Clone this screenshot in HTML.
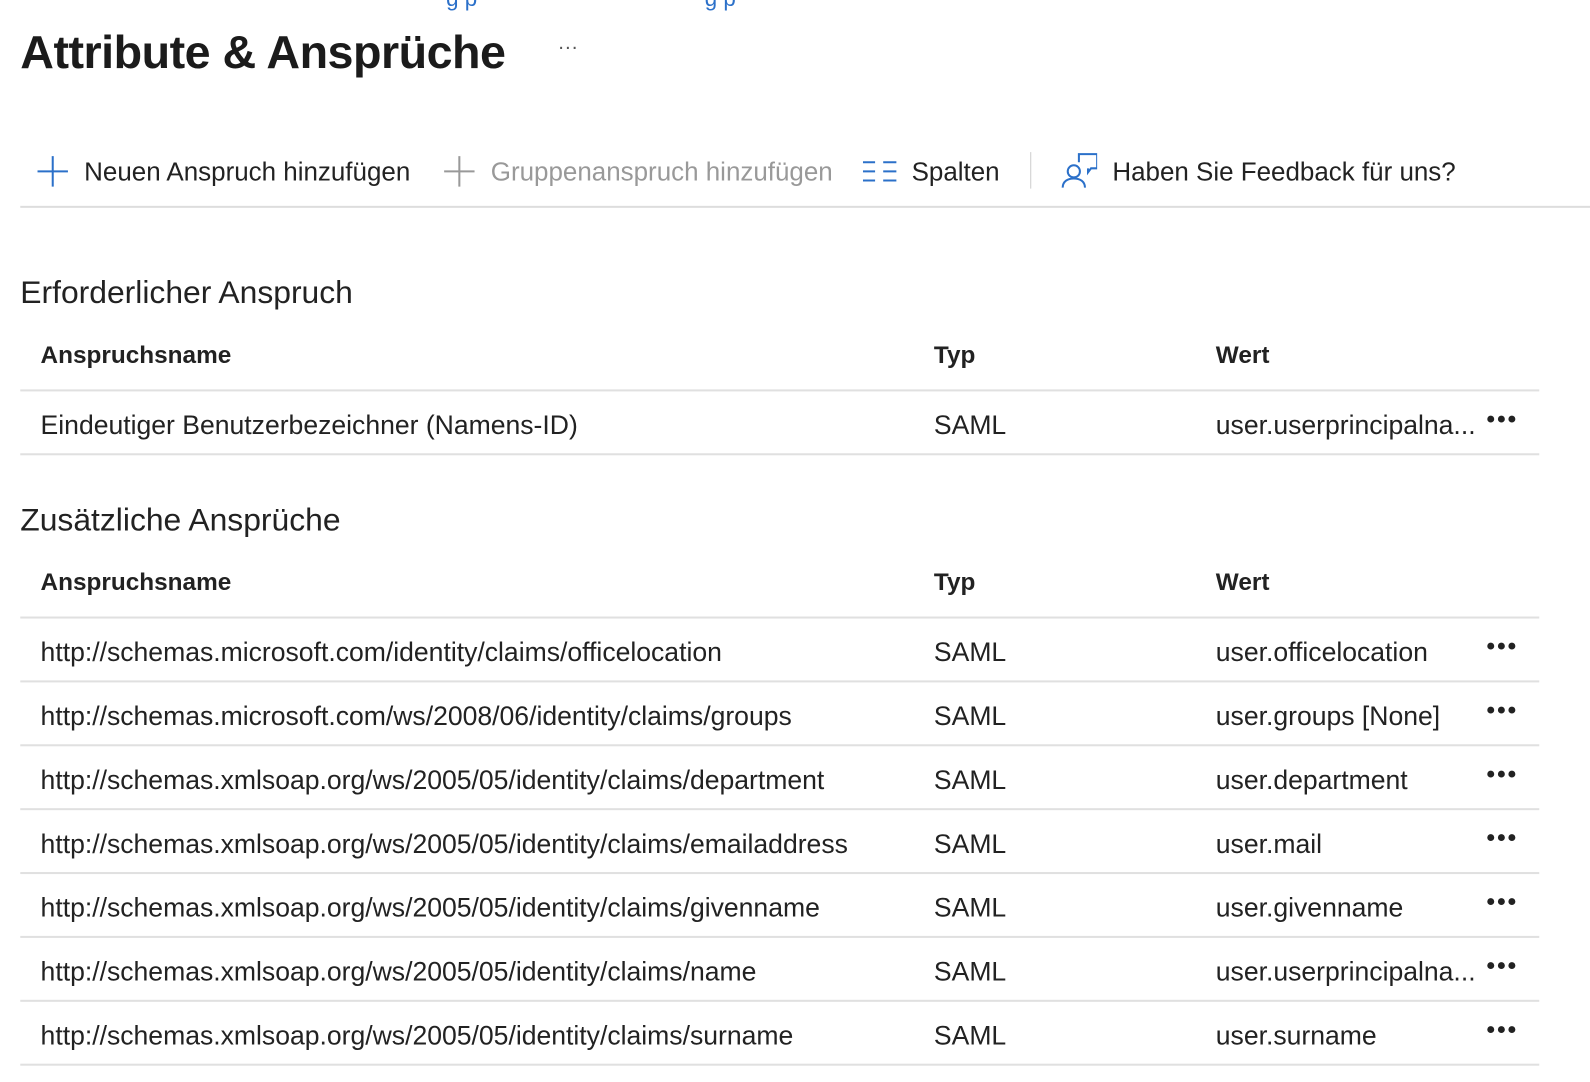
<!DOCTYPE html>
<html><head><meta charset="utf-8"><style>
body{margin:0;width:1590px;height:1082px;background:#fff;font-family:"Liberation Sans",sans-serif;color:#222;overflow:hidden}
#w{position:absolute;left:0;top:0;width:1568px;height:1067px;transform:scale(1.014);transform-origin:0 0}
.a{position:absolute;white-space:nowrap}
h1{position:absolute;left:20px;top:24px;margin:0;font-size:46px;font-weight:bold;letter-spacing:-0.5px;color:#1b1b1b}
.tb{font-size:25.6px;top:156px}
.sec{font-size:31.4px;color:#222}
.row{position:absolute;left:20px;width:1498px;height:63px;border-bottom:2px solid #e0e0e0;font-size:26.2px}
.row span{position:absolute;top:20px;white-space:nowrap}
.h span{font-weight:bold;font-size:24px;top:16px}
.c1{left:20px}.c2{left:901px}.c3{left:1179px}
.d{left:1446px;letter-spacing:2px;font-weight:bold;font-size:24px;top:16px!important}
</style></head><body><div id="w">
<div class="a" style="left:440px;top:-14px;font-size:22px;color:#2b70c9">g p</div>
<div class="a" style="left:695px;top:-14px;font-size:22px;color:#2b70c9">g p</div>
<h1>Attribute &amp; Ansprüche</h1>
<div class="a" style="left:550px;top:36px;font-size:20px;color:#555">···</div>
<svg class="a" style="left:36px;top:153px" width="32" height="32"><path d="M16 1V31M1 16H31" stroke="#2b70c9" stroke-width="2"/></svg>
<div class="a tb" style="left:83px">Neuen Anspruch hinzufügen</div>
<svg class="a" style="left:437px;top:153px" width="32" height="32"><path d="M16 1V31M1 16H31" stroke="#999" stroke-width="2"/></svg>
<div class="a tb" style="left:484px;color:#999">Gruppenanspruch hinzufügen</div>
<svg class="a" style="left:851px;top:157px" width="34" height="24"><path d="M0 3H12M20 3H33M0 12H12M20 12H33M0 21H12M20 21H33" stroke="#2b70c9" stroke-width="2"/></svg>
<div class="a tb" style="left:899px">Spalten</div>
<div class="a" style="left:1016px;top:150px;width:1px;height:36px;background:#ccc"></div>
<svg class="a" style="left:1046px;top:150px" width="36" height="36"><path d="M18 10V2H36V16H30L27 20V16" fill="none" stroke="#2b70c9" stroke-width="2"/><circle cx="13" cy="19" r="6" fill="none" stroke="#2b70c9" stroke-width="2"/><path d="M2 35C2 29 7 26 13 26S24 29 24 35" fill="none" stroke="#2b70c9" stroke-width="2"/></svg>
<div class="a tb" style="left:1097px">Haben Sie Feedback für uns?</div>
<div class="a" style="left:20px;top:203px;width:1570px;height:2px;background:#ddd"></div>

<div class="a sec" style="left:20px;top:271px">Erforderlicher Anspruch</div>
<div class="row h" style="top:321px"><span class="c1">Anspruchsname</span><span class="c2">Typ</span><span class="c3">Wert</span></div>
<div class="row" style="top:384px"><span class="c1">Eindeutiger Benutzerbezeichner (Namens-ID)</span><span class="c2">SAML</span><span class="c3">user.userprincipalna...</span><span class="d">•••</span></div>

<div class="a sec" style="left:20px;top:495px">Zusätzliche Ansprüche</div>
<div class="row h" style="top:545px"><span class="c1">Anspruchsname</span><span class="c2">Typ</span><span class="c3">Wert</span></div>
<div class="row" style="top:608px"><span class="c1">http://schemas.microsoft.com/identity/claims/officelocation</span><span class="c2">SAML</span><span class="c3">user.officelocation</span><span class="d">•••</span></div>
<div class="row" style="top:671px"><span class="c1">http://schemas.microsoft.com/ws/2008/06/identity/claims/groups</span><span class="c2">SAML</span><span class="c3">user.groups [None]</span><span class="d">•••</span></div>
<div class="row" style="top:734px"><span class="c1">http://schemas.xmlsoap.org/ws/2005/05/identity/claims/department</span><span class="c2">SAML</span><span class="c3">user.department</span><span class="d">•••</span></div>
<div class="row" style="top:797px"><span class="c1">http://schemas.xmlsoap.org/ws/2005/05/identity/claims/emailaddress</span><span class="c2">SAML</span><span class="c3">user.mail</span><span class="d">•••</span></div>
<div class="row" style="top:860px"><span class="c1">http://schemas.xmlsoap.org/ws/2005/05/identity/claims/givenname</span><span class="c2">SAML</span><span class="c3">user.givenname</span><span class="d">•••</span></div>
<div class="row" style="top:923px"><span class="c1">http://schemas.xmlsoap.org/ws/2005/05/identity/claims/name</span><span class="c2">SAML</span><span class="c3">user.userprincipalna...</span><span class="d">•••</span></div>
<div class="row" style="top:986px"><span class="c1">http://schemas.xmlsoap.org/ws/2005/05/identity/claims/surname</span><span class="c2">SAML</span><span class="c3">user.surname</span><span class="d">•••</span></div>
</div></body></html>
